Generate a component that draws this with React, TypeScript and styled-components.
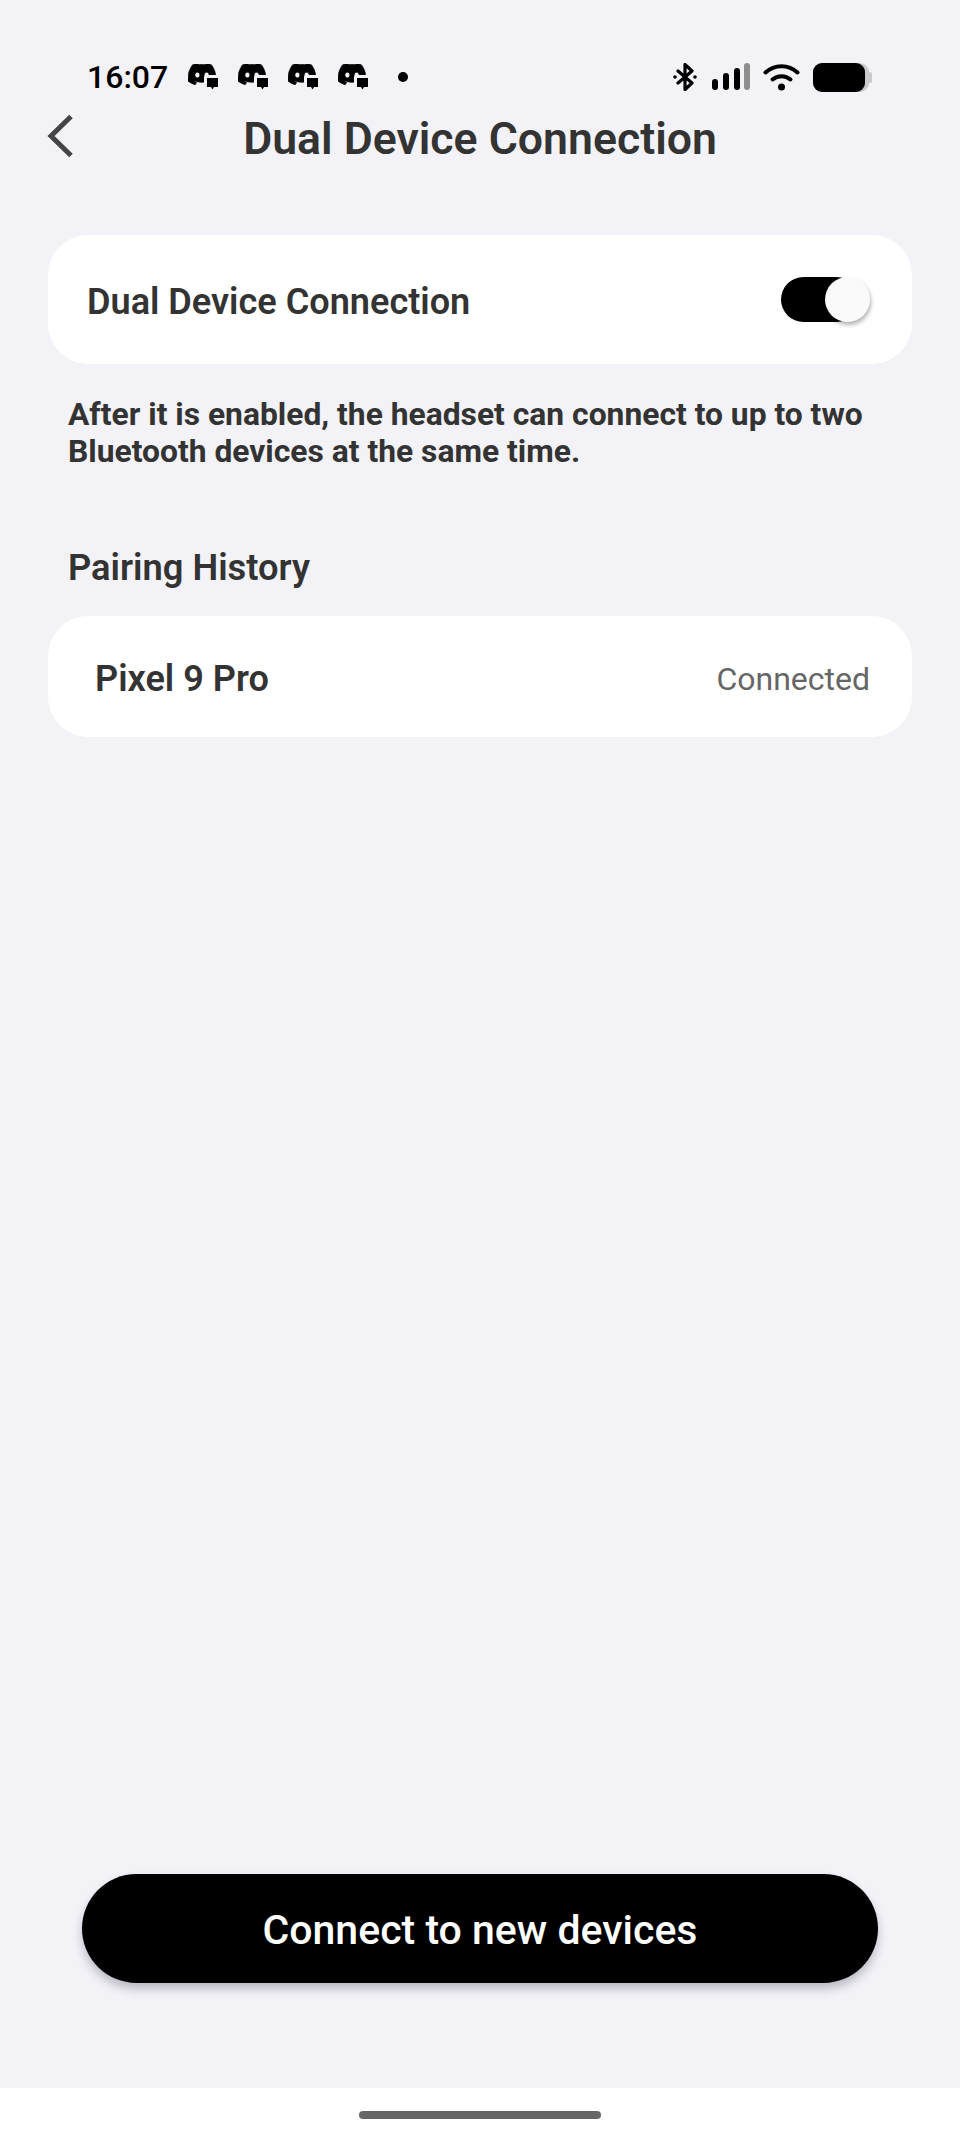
import React from 'react';
import styled, { createGlobalStyle } from 'styled-components';
import { SiDiscord } from 'react-icons/si';

const GlobalStyle = createGlobalStyle`
  html, body {
    margin: 0;
    padding: 0;
    background: #f2f2f7;
    font-family: Roboto, "Liberation Sans", sans-serif;
  }
  * {
    box-sizing: border-box;
  }
`;

const Screen = styled.div`
  width: 960px;
  height: 2142px;
  display: flex;
  flex-direction: column;
  overflow: hidden;
  background: #f2f2f7;
  color: #333;
`;
const StatusBar = styled.div`
  height: 114px;
  padding: 62px 87px 0 87px;
  display: flex;
  align-items: flex-start;
  justify-content: space-between;
  color: #000;
`;
const StatusGroup = styled.div`
  height: 30px;
  display: flex;
  align-items: center;
`;
const Clock = styled.span`
  width: 101px;
  font-size: 32px;
  font-weight: 500;
  line-height: 30px;
`;
const NotificationIcons = styled.div`
  display: flex;
  gap: 20px;
`;
const Dot = styled.span`
  width: 10px;
  height: 10px;
  margin-left: 30px;
  border-radius: 50%;
  background: #000;
`;
const SystemIcons = styled(StatusGroup)`
  gap: 13px;
  margin-right: 1px;
`;
const Header = styled.header`
  height: 121px;
  padding: 0 47px;
  display: grid;
  grid-template-columns: 1fr auto 1fr;
  align-items: start;
`;
const Back = styled.button`
  width: 27px;
  height: 44px;
  padding: 0;
  border: 0;
  background: none;
  color: #444;
  display: block;
`;
const Title = styled.h1`
  margin: 1px 0 0;
  font-size: 44.6px;
  line-height: 48px;
  font-weight: 600;
  white-space: nowrap;
`;
const Main = styled.main`
  flex: 1;
  padding: 0 48px;
  display: flex;
  flex-direction: column;
`;
const Card = styled.div<{ $height: number; $inset: number }>`
  height: ${p => p.$height}px;
  padding: 4px 42px 0 ${p => p.$inset}px;
  display: flex;
  align-items: center;
  justify-content: space-between;
  background: #fff;
  border-radius: 40px;
`;
const RowLabel = styled.span`
  font-size: 36.1px;
  font-weight: 600;
`;
const Switch = styled.div`
  width: 78px;
  height: 45px;
  margin: -5px 11px 0 0;
  position: relative;
  background: #000;
  border-radius: 23px;
`;
const Knob = styled.span`
  position: absolute;
  top: 0;
  right: -11px;
  width: 45px;
  height: 45px;
  border-radius: 50%;
  background: #fafafa;
  box-shadow: 1px 3px 4px rgba(0, 0, 0, 0.3);
`;
const Hint = styled.p`
  margin: 32px 0 0 20px;
  font-size: 31.8px;
  line-height: 37px;
  font-weight: 700;
`;
const SectionTitle = styled.h2`
  margin: 77px 0 0 20px;
  font-size: 36.3px;
  line-height: 42px;
  font-weight: 600;
`;
const DeviceCard = styled(Card)`
  margin-top: 27px;
`;
const DeviceStatus = styled.span`
  font-size: 32px;
  color: #666;
`;
const PrimaryButton = styled.button`
  height: 109px;
  margin: auto 34px 105px 34px;
  padding: 2px 0 0;
  border: 0;
  border-radius: 55px;
  background: #000;
  color: #fff;
  font: 500 41px Roboto, "Liberation Sans", sans-serif;
  box-shadow: 0 6px 10px rgba(60, 60, 80, 0.3);
`;
const NavBar = styled.div`
  height: 54px;
  display: flex;
  align-items: center;
  justify-content: center;
  background: #fff;
`;
const NavPill = styled.span`
  width: 242px;
  height: 8px;
  border-radius: 4px;
  background: #666;
`;

const DiscordBubble = () => (
  <svg width="30" height="26" viewBox="0 0 30 26" fill="currentColor">
    <SiDiscord x="0" y="-4" size={28} stroke="currentColor" strokeWidth="0.6" />
    <path
      d="M16 13a2 2 0 0 1 2-2h12v13h-4l-2 2-2-2h-4a2 2 0 0 1-2-2z"
      fill="#f2f2f7"
    />
    <path d="M19 14h11v9h-4l-1.500 2.500L23 23h-4z" />
  </svg>
);

const BluetoothIcon = () => (
  <svg width="26" height="28" viewBox="0 0 26 28" fill="none">
    <path
      d="M5 8l14 12-7 6.500V1.500l7 6.500L5 20"
      stroke="currentColor"
      strokeWidth="3.200"
      strokeLinejoin="round"
      strokeLinecap="round"
    />
    <circle cx="2" cy="14" r="1.800" fill="currentColor" />
    <circle cx="22" cy="14" r="1.800" fill="currentColor" />
  </svg>
);

const SignalIcon = () => (
  <svg width="38" height="28" viewBox="0 0 38 28" fill="currentColor">
    <rect x="0" y="16" width="6" height="11" rx="3" />
    <rect x="11" y="10" width="6" height="17" rx="3" />
    <rect x="22" y="5" width="6" height="22" rx="3" />
    <rect x="32" y="0" width="6" height="27" rx="3" fill="#8e8e8e" />
  </svg>
);

const WifiIcon = () => (
  <svg width="37" height="28" viewBox="0 0 37 28" fill="none" stroke="currentColor" strokeWidth="4" strokeLinecap="round">
    <path d="M2.500 9.500c9-8.500 23-8.500 32 0" />
    <path d="M9.500 16.500c5-4.500 13-4.500 18 0" />
    <circle cx="18.500" cy="24" r="3.500" fill="currentColor" stroke="none" />
  </svg>
);

const BatteryIcon = () => (
  <svg width="59" height="29" viewBox="0 0 59 29">
    <rect x="0" y="0" width="56" height="29" rx="9" fill="#c9c9ce" />
    <rect x="0" y="0" width="52" height="29" rx="9" fill="#000" />
    <path d="M56 9h1a2 2 0 0 1 2 2v7a2 2 0 0 1-2 2h-1z" fill="#c9c9ce" />
  </svg>
);

const App: React.FC = () => (
  <Screen>
    <GlobalStyle />
    <StatusBar>
      <StatusGroup>
        <Clock>16:07</Clock>
        <NotificationIcons>
          <DiscordBubble />
          <DiscordBubble />
          <DiscordBubble />
          <DiscordBubble />
        </NotificationIcons>
        <Dot />
      </StatusGroup>
      <SystemIcons>
        <BluetoothIcon />
        <SignalIcon />
        <WifiIcon />
        <BatteryIcon />
      </SystemIcons>
    </StatusBar>
    <Header>
      <Back aria-label="Back">
        <svg width="27" height="44" viewBox="0 0 27 44" fill="none">
          <path d="M24 2.500L4 22l20 19.500" stroke="currentColor" strokeWidth="5" />
        </svg>
      </Back>
      <Title>Dual Device Connection</Title>
    </Header>
    <Main>
      <Card $height={129} $inset={39}>
        <RowLabel>Dual Device Connection</RowLabel>
        <Switch>
          <Knob />
        </Switch>
      </Card>
      <Hint>
        After it is enabled, the headset can connect to up to two
        <br />
        Bluetooth devices at the same time.
      </Hint>
      <SectionTitle>Pairing History</SectionTitle>
      <DeviceCard $height={121} $inset={47}>
        <RowLabel>Pixel 9 Pro</RowLabel>
        <DeviceStatus>Connected</DeviceStatus>
      </DeviceCard>
      <PrimaryButton>Connect to new devices</PrimaryButton>
    </Main>
    <NavBar>
      <NavPill />
    </NavBar>
  </Screen>
);

export default App;
